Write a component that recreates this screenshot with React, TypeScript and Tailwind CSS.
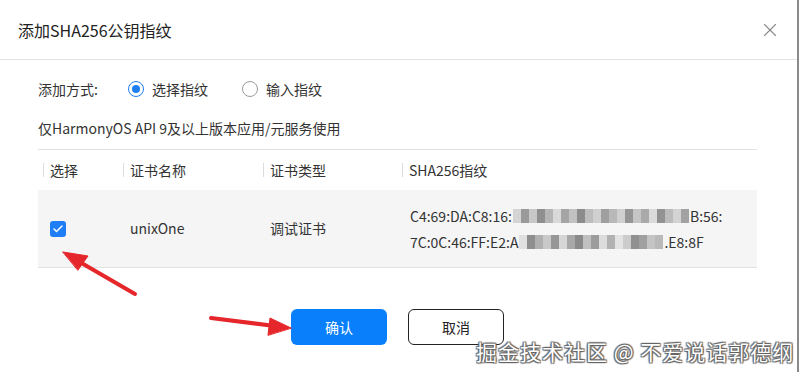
import { X, Check } from "lucide-react";

const mosaic1 = ["#d4d4d4", "#9a9a9a", "#c8c8c8", "#8f8f8f", "#b5b5b5", "#d9d9d9", "#a5a5a5", "#c2c2c2", "#8c8c8c", "#bdbdbd", "#d0d0d0", "#9f9f9f", "#b8b8b8", "#cfcfcf", "#959595", "#c5c5c5", "#aaaaaa", "#dadada", "#929292", "#bcbcbc", "#d3d3d3", "#a2a2a2"];
const mosaic2 = ["#e0e0e0", "#8e8e8e", "#b0b0b0", "#c9c9c9", "#979797", "#d6d6d6", "#a8a8a8", "#8a8a8a", "#c0c0c0", "#9c9c9c", "#dcdcdc", "#b2b2b2", "#e3e3e3", "#cccccc", "#909090", "#a0a0a0", "#c4c4c4", "#b9b9b9"];

function Mosaic({ cells }: { cells: string[] }) {
  return (
    <span className="inline-flex h-[14px] align-middle mx-[1px]">
      {cells.map((c, i) => (
        <span key={i} className="w-[8px] h-full" style={{ background: c }} />
      ))}
    </span>
  );
}

function Radio({ checked, label }: { checked?: boolean; label: string }) {
  return (
    <label className="flex items-center gap-[8px]">
      <span
        className={
          checked
            ? "w-[16px] h-[16px] rounded-full border border-[#1f7ef5] flex items-center justify-center"
            : "w-[16px] h-[16px] rounded-full border border-[#9a9a9a]"
        }
      >
        {checked && <span className="w-[8px] h-[8px] rounded-full bg-[#1f7ef5]" />}
      </span>
      <span>{label}</span>
    </label>
  );
}

function HeadCell({ w, children }: { w: string; children: React.ReactNode }) {
  return (
    <div className={`${w} flex items-center pl-[5px]`}>
      <span className="w-px h-[14px] bg-[#dcdcdc] mr-[6px]" />
      {children}
    </div>
  );
}

export default function App() {
  return (
    <div
      className="relative w-[799px] h-[372px] overflow-hidden bg-white text-[14px] text-[#333]"
      style={{ fontFamily: '"Noto Sans CJK SC", "Noto Sans", sans-serif' }}
    >
      <div className="w-[797px] h-full border-r-2 border-[#8a8a8a] box-content">
        <div className="h-[60px] flex items-center justify-between pl-[18px] pr-[16px] border-b border-[#e2e2e2]">
          <h1 className="text-[16px] text-[#222]">添加SHA256公钥指纹</h1>
          <X className="w-[22px] h-[22px] text-[#8a8a8a]" strokeWidth={1.2} />
        </div>

        <div className="pl-[38px] pr-[40px]">
          <div className="flex items-center h-[20px] mt-[19px]">
            <span className="w-[90px]">添加方式:</span>
            <div className="flex items-center gap-[34px]">
              <Radio checked label="选择指纹" />
              <Radio label="输入指纹" />
            </div>
          </div>

          <p className="mt-[19px] leading-[20px]">仅HarmonyOS API 9及以上版本应用/元服务使用</p>

          <div className="mt-[11px] border-t border-[#e2e2e2]">
            <div className="flex h-[40px] items-center">
              <HeadCell w="w-[80px]">选择</HeadCell>
              <HeadCell w="w-[140px]">证书名称</HeadCell>
              <HeadCell w="w-[139px]">证书类型</HeadCell>
              <HeadCell w="flex-1">SHA256指纹</HeadCell>
            </div>
            <div className="flex h-[78px] items-center bg-[#f5f5f5] border-b border-[#e2e2e2]">
              <div className="w-[80px] pl-[12px]">
                <span className="w-[16px] h-[16px] rounded-[3px] bg-[#1f7ef5] flex items-center justify-center">
                  <Check className="w-[12px] h-[12px] text-white" strokeWidth={3} />
                </span>
              </div>
              <div className="w-[140px] pl-[12px]">unixOne</div>
              <div className="w-[139px] pl-[12px]">调试证书</div>
              <div className="flex-1 pl-[13px] leading-[26px]">
                <div className="flex items-center">
                  C4:69:DA:C8:16:<Mosaic cells={mosaic1} />B:56:
                </div>
                <div className="flex items-center">
                  7C:0C:46:FF:E2:A<Mosaic cells={mosaic2} />.E8:8F
                </div>
              </div>
            </div>
          </div>

          <div className="flex justify-center gap-[21px] mt-[41px]">
            <button className="w-[96px] h-[36px] rounded-[6px] bg-[#0a7ffb] text-white">确认</button>
            <button className="w-[96px] h-[36px] rounded-[6px] border border-[#222] text-[#222]">取消</button>
          </div>
        </div>
      </div>

      <svg className="absolute left-0 top-0 pointer-events-none" width="799" height="372">
        <g fill="#e5262a" stroke="#e5262a" strokeLinecap="round">
          <line x1="135" y1="294" x2="78" y2="261" strokeWidth="4" />
          <polygon points="63,252 88,256 78,270" strokeWidth="1" strokeLinejoin="round" />
          <line x1="211" y1="318" x2="275" y2="326" strokeWidth="4" />
          <polygon points="291,328 270,318 268,335" strokeWidth="1" strokeLinejoin="round" />
        </g>
      </svg>

      <div
        className="absolute left-[476px] top-[337px] text-[21px] text-white leading-[28px] tracking-[1px]"
        style={{ textShadow: "0 0 1px #555, 1px 1px 1px #666, -1px -1px 1px #666, 1px -1px 1px #666, -1px 1px 1px #666" }}
      >
        掘金技术社区 @ 不爱说话郭德纲
      </div>
    </div>
  );
}
